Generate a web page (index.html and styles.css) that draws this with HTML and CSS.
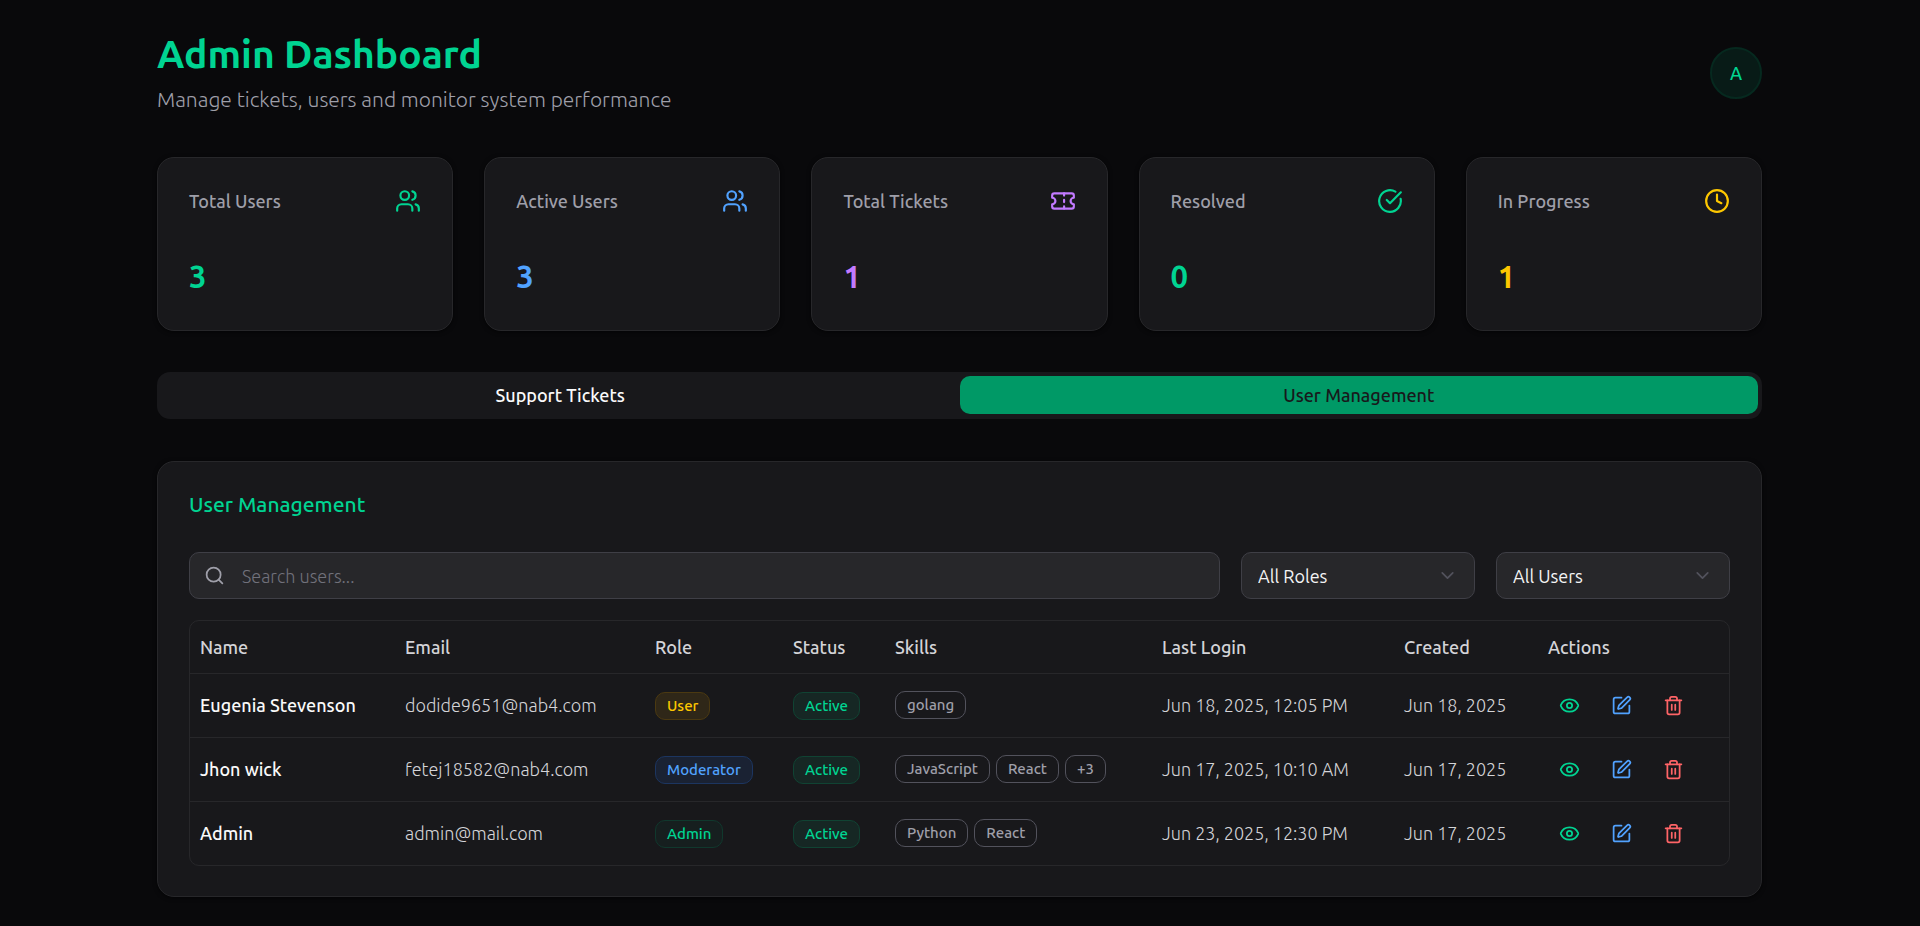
FILE: index.html
```html
<!DOCTYPE html>
<html lang="en">
<head>
    <meta charset="UTF-8">
    <meta name="viewport" content="width=device-width, initial-scale=1.0">
    <title>Admin Dashboard</title>
    <link rel="stylesheet" href="styles.css">
</head>
<body>
    <!-- Icon definitions -->
    <svg class="icon-defs" aria-hidden="true">
        <symbol id="icon-users" viewBox="0 0 24 24">
            <path d="M16 21v-2a4 4 0 0 0-4-4H6a4 4 0 0 0-4 4v2"/>
            <circle cx="9" cy="7" r="4"/>
            <path d="M22 21v-2a4 4 0 0 0-3-3.87"/>
            <path d="M16 3.13a4 4 0 0 1 0 7.75"/>
        </symbol>
        <symbol id="icon-ticket" viewBox="0 0 24 24">
            <path d="M2 9a3 3 0 0 1 0 6v2a2 2 0 0 0 2 2h16a2 2 0 0 0 2-2v-2a3 3 0 0 1 0-6V7a2 2 0 0 0-2-2H4a2 2 0 0 0-2 2Z"/>
            <path d="M13 5v2"/>
            <path d="M13 17v2"/>
            <path d="M13 11v2"/>
        </symbol>
        <symbol id="icon-check" viewBox="0 0 24 24">
            <path d="M21.801 10A10 10 0 1 1 17 3.335"/>
            <path d="m9 11 3 3L22 4"/>
        </symbol>
        <symbol id="icon-clock" viewBox="0 0 24 24">
            <circle cx="12" cy="12" r="10"/>
            <path d="M12 6v6l4 2"/>
        </symbol>
        <symbol id="icon-search" viewBox="0 0 24 24">
            <circle cx="11" cy="11" r="8"/>
            <path d="m21 21-4.3-4.3"/>
        </symbol>
        <symbol id="icon-chevron" viewBox="0 0 24 24">
            <path d="m6 9 6 6 6-6"/>
        </symbol>
        <symbol id="icon-eye" viewBox="0 0 24 24">
            <path d="M2.062 12.348a1 1 0 0 1 0-.696 10.75 10.75 0 0 1 19.876 0 1 1 0 0 1 0 .696 10.75 10.75 0 0 1-19.876 0"/>
            <circle cx="12" cy="12" r="3"/>
        </symbol>
        <symbol id="icon-edit" viewBox="0 0 24 24">
            <path d="M12 3H5a2 2 0 0 0-2 2v14a2 2 0 0 0 2 2h14a2 2 0 0 0 2-2v-7"/>
            <path d="M18.375 2.625a1 1 0 0 1 3 3l-9.013 9.014a2 2 0 0 1-.853.505l-2.873.84a.5.5 0 0 1-.62-.62l.84-2.873a2 2 0 0 1 .506-.852z"/>
        </symbol>
        <symbol id="icon-trash" viewBox="0 0 24 24">
            <path d="M3 6h18"/>
            <path d="M19 6v14c0 1-1 2-2 2H7c-1 0-2-1-2-2V6"/>
            <path d="M8 6V4c0-1 1-2 2-2h4c1 0 2 1 2 2v2"/>
            <path d="M10 11v6"/>
            <path d="M14 11v6"/>
        </symbol>
    </svg>

    <main class="container">
        <header class="header">
            <div>
                <h1>Admin Dashboard</h1>
                <p class="subtitle">Manage tickets, users and monitor system performance</p>
            </div>
            <button class="avatar" aria-label="Account">A</button>
        </header>

        <!-- Stats -->
        <section class="stats">
            <div class="card stat green">
                <div class="stat-head">
                    <span class="stat-label">Total Users</span>
                    <svg class="icon"><use href="#icon-users"/></svg>
                </div>
                <div class="stat-value">3</div>
            </div>
            <div class="card stat blue">
                <div class="stat-head">
                    <span class="stat-label">Active Users</span>
                    <svg class="icon"><use href="#icon-users"/></svg>
                </div>
                <div class="stat-value">3</div>
            </div>
            <div class="card stat purple">
                <div class="stat-head">
                    <span class="stat-label">Total Tickets</span>
                    <svg class="icon"><use href="#icon-ticket"/></svg>
                </div>
                <div class="stat-value">1</div>
            </div>
            <div class="card stat green">
                <div class="stat-head">
                    <span class="stat-label">Resolved</span>
                    <svg class="icon"><use href="#icon-check"/></svg>
                </div>
                <div class="stat-value">0</div>
            </div>
            <div class="card stat yellow">
                <div class="stat-head">
                    <span class="stat-label">In Progress</span>
                    <svg class="icon"><use href="#icon-clock"/></svg>
                </div>
                <div class="stat-value">1</div>
            </div>
        </section>

        <!-- Tabs -->
        <div class="tabs" role="tablist">
            <button class="tab" role="tab" aria-selected="false">Support Tickets</button>
            <button class="tab active" role="tab" aria-selected="true">User Management</button>
        </div>

        <!-- User management -->
        <section class="card panel">
            <h2>User Management</h2>

            <div class="filters">
                <div class="search">
                    <svg class="icon"><use href="#icon-search"/></svg>
                    <input type="text" placeholder="Search users..." aria-label="Search users">
                </div>
                <div class="select">
                    <select aria-label="Role">
                        <option>All Roles</option>
                        <option>Admin</option>
                        <option>Moderator</option>
                        <option>User</option>
                    </select>
                    <svg class="icon"><use href="#icon-chevron"/></svg>
                </div>
                <div class="select">
                    <select aria-label="Status">
                        <option>All Users</option>
                        <option>Active</option>
                    </select>
                    <svg class="icon"><use href="#icon-chevron"/></svg>
                </div>
            </div>

            <div class="table-wrap">
                <table>
                    <colgroup>
                        <col class="col-name">
                        <col class="col-email">
                        <col class="col-role">
                        <col class="col-status">
                        <col class="col-skills">
                        <col class="col-login">
                        <col class="col-created">
                        <col class="col-actions">
                    </colgroup>
                    <thead>
                        <tr>
                            <th>Name</th>
                            <th>Email</th>
                            <th>Role</th>
                            <th>Status</th>
                            <th>Skills</th>
                            <th>Last Login</th>
                            <th>Created</th>
                            <th>Actions</th>
                        </tr>
                    </thead>
                    <tbody>
                        <tr>
                            <td class="name">Eugenia Stevenson</td>
                            <td>dodide9651@nab4.com</td>
                            <td><span class="badge role-user">User</span></td>
                            <td><span class="badge status-active">Active</span></td>
                            <td>
                                <div class="skills">
                                    <span class="badge">golang</span>
                                </div>
                            </td>
                            <td>Jun 18, 2025, 12:05 PM</td>
                            <td>Jun 18, 2025</td>
                            <td>
                                <div class="actions">
                                    <button class="green" aria-label="View"><svg class="icon"><use href="#icon-eye"/></svg></button>
                                    <button class="blue" aria-label="Edit"><svg class="icon"><use href="#icon-edit"/></svg></button>
                                    <button class="red" aria-label="Delete"><svg class="icon"><use href="#icon-trash"/></svg></button>
                                </div>
                            </td>
                        </tr>
                        <tr>
                            <td class="name">Jhon wick</td>
                            <td>fetej18582@nab4.com</td>
                            <td><span class="badge role-moderator">Moderator</span></td>
                            <td><span class="badge status-active">Active</span></td>
                            <td>
                                <div class="skills">
                                    <span class="badge">JavaScript</span>
                                    <span class="badge">React</span>
                                    <span class="badge">+3</span>
                                </div>
                            </td>
                            <td>Jun 17, 2025, 10:10 AM</td>
                            <td>Jun 17, 2025</td>
                            <td>
                                <div class="actions">
                                    <button class="green" aria-label="View"><svg class="icon"><use href="#icon-eye"/></svg></button>
                                    <button class="blue" aria-label="Edit"><svg class="icon"><use href="#icon-edit"/></svg></button>
                                    <button class="red" aria-label="Delete"><svg class="icon"><use href="#icon-trash"/></svg></button>
                                </div>
                            </td>
                        </tr>
                        <tr>
                            <td class="name">Admin</td>
                            <td>admin@mail.com</td>
                            <td><span class="badge role-admin">Admin</span></td>
                            <td><span class="badge status-active">Active</span></td>
                            <td>
                                <div class="skills">
                                    <span class="badge">Python</span>
                                    <span class="badge">React</span>
                                </div>
                            </td>
                            <td>Jun 23, 2025, 12:30 PM</td>
                            <td>Jun 17, 2025</td>
                            <td>
                                <div class="actions">
                                    <button class="green" aria-label="View"><svg class="icon"><use href="#icon-eye"/></svg></button>
                                    <button class="blue" aria-label="Edit"><svg class="icon"><use href="#icon-edit"/></svg></button>
                                    <button class="red" aria-label="Delete"><svg class="icon"><use href="#icon-trash"/></svg></button>
                                </div>
                            </td>
                        </tr>
                    </tbody>
                </table>
            </div>
        </section>
    </main>
</body>
</html>
```
FILE: styles.css
```css
/* General styles */
* {
    box-sizing: border-box;
}

body {
    margin: 0;
    background: #09090b;
    color: #fafafa;
    font-family: Ubuntu, "Noto Sans", "Open Sans", sans-serif;
    font-size: 18px;
    line-height: 26px;
}

h1, h2, p {
    margin: 0;
}

button, input, select {
    font: inherit;
    color: inherit;
}

button {
    padding: 0;
    border: none;
    background: none;
    cursor: pointer;
}

.icon-defs {
    display: none;
}

.icon {
    width: 21px;
    height: 21px;
    flex-shrink: 0;
    fill: none;
    stroke: currentColor;
    stroke-width: 2;
    stroke-linecap: round;
    stroke-linejoin: round;
}

/* Accent colors */
.green { color: #00d492; }
.blue { color: #51a2ff; }
.purple { color: #c27aff; }
.yellow { color: #fdc700; }
.red { color: #ff6467; }

.container {
    max-width: 1670px;
    margin: 0 auto;
    padding: 32px 33px 24px 32px;
}

/* Header */
.header {
    display: flex;
    justify-content: space-between;
    align-items: center;
    margin-bottom: 44px;
}

h1 {
    font-size: 39px;
    font-weight: 600;
    line-height: 44px;
    color: #00d492;
}

.subtitle {
    margin-top: 9px;
    font-size: 21px;
    font-weight: 300;
    line-height: 28px;
    color: #9f9fa9;
}

.avatar {
    width: 52px;
    height: 52px;
    border: 2px solid #06291f;
    border-radius: 50%;
    background: #081b17;
    color: #00d492;
    font-weight: 500;
}

/* Cards */
.card {
    border: 1px solid #27272a;
    border-radius: 17px;
    background: #18181b;
    box-shadow: 0 1px 4px rgba(0, 0, 0, 0.6);
}

.stats {
    display: grid;
    grid-template-columns: repeat(5, 1fr);
    gap: 31px;
    margin-bottom: 41px;
}

.stat {
    padding: 30px 31px 33px;
}

.stat-head {
    display: flex;
    justify-content: space-between;
    align-items: center;
    margin-bottom: 43px;
}

.stat-head .icon {
    width: 26px;
    height: 26px;
}

.stat-label {
    color: #9f9fa9;
    font-weight: 500;
}

.stat-value {
    font-size: 31px;
    font-weight: 700;
    line-height: 40px;
}

/* Tabs */
.tabs {
    display: grid;
    grid-template-columns: 1fr 1fr;
    margin-bottom: 42px;
    padding: 4px 4px 5px;
    border-radius: 13px;
    background: #18181b;
}

.tab {
    height: 38px;
    border-radius: 10px;
    font-weight: 500;
}

.tab.active {
    background: #009966;
    color: #18181b;
}

/* User management panel */
.panel {
    padding: 30px 31px;
}

h2 {
    margin-bottom: 36px;
    font-size: 21px;
    font-weight: 500;
    line-height: 24px;
    color: #00d492;
}

.filters {
    display: flex;
    gap: 21px;
    margin-bottom: 21px;
}

.search,
.select {
    display: flex;
    align-items: center;
    height: 47px;
    border: 1px solid #3f3f46;
    border-radius: 10px;
    background: #27272a;
}

.search {
    flex: 1;
    padding-left: 14px;
    gap: 17px;
    color: #9f9fa9;
}

.search input {
    flex: 1;
    height: 100%;
    padding: 0;
    border: none;
    outline: none;
    background: none;
    color: #fafafa;
    font-weight: 300;
}

.search input::placeholder {
    color: #71717b;
}

.select {
    position: relative;
    width: 234px;
}

.select select {
    width: 100%;
    height: 100%;
    padding: 0 16px;
    border: none;
    outline: none;
    appearance: none;
    background: none;
    color: #f4f4f5;
}

.select .icon {
    position: absolute;
    right: 16px;
    color: #52525c;
    pointer-events: none;
}

/* Users table */
.table-wrap {
    border: 1px solid #27272a;
    border-radius: 10px;
}

table {
    width: 100%;
    table-layout: fixed;
    border-collapse: collapse;
}

.col-name { width: 205px; }
.col-email { width: 250px; }
.col-role { width: 138px; }
.col-status { width: 102px; }
.col-skills { width: 267px; }
.col-login { width: 242px; }
.col-created { width: 144px; }
.col-actions { width: 191px; }

th, td {
    padding: 0 10px;
    text-align: left;
    white-space: nowrap;
    color: #d4d4d8;
}

th {
    height: 52px;
    font-weight: 500;
}

td {
    height: 64px;
    border-top: 1px solid #27272a;
    font-weight: 300;
}

td.name {
    color: #fafafa;
    font-weight: 500;
}

.badge {
    display: inline-block;
    padding: 0 11px;
    border: 1px solid #52525c;
    border-radius: 10px;
    color: #9f9fa9;
    font-size: 15px;
    font-weight: 500;
    line-height: 26px;
    vertical-align: middle;
}

.role-user {
    border-color: #4b3911;
    background: #2f2718;
    color: #fdc700;
}

.role-moderator {
    border-color: #1c3560;
    background: #1a2233;
    color: #51a2ff;
}

.role-admin {
    border-color: #10382d;
    background: #161f1f;
    color: #00d492;
}

.status-active {
    border-color: #104333;
    background: #162724;
    color: #00d492;
}

.skills {
    display: flex;
    gap: 6px;
}

.actions {
    display: flex;
    gap: 10px;
}

.actions button {
    display: flex;
    justify-content: center;
    align-items: center;
    width: 42px;
    height: 40px;
}
```
